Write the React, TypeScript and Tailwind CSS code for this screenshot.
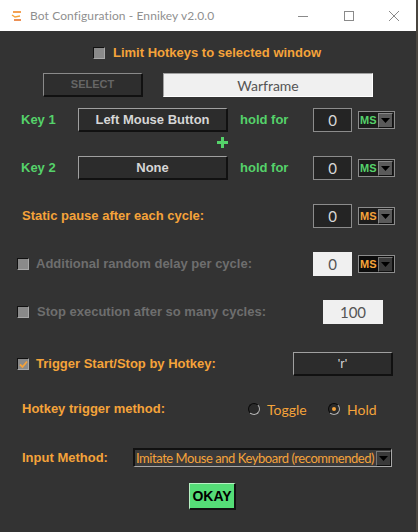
import React from 'react';

const bold = "font-['Liberation_Sans',Arial,sans-serif] font-bold";
const ui = "font-['Lato','Noto_Sans',sans-serif]";

function CheckBox({ checked = false }: { checked?: boolean }) {
  return (
    <div className="w-[12px] h-[12px] border-t border-l border-[#111] border-b border-r border-b-[#a8a8a8] border-r-[#a8a8a8] bg-[#8a8a8a] flex items-center justify-center shrink-0">
      {checked && (
        <svg width="9" height="9" viewBox="0 0 9 9">
          <path d="M1 4.5 L3.5 7 L8 1.5" fill="none" stroke="#f5a33a" strokeWidth="1.8" />
        </svg>
      )}
    </div>
  );
}

function Radio({ checked = false }: { checked?: boolean }) {
  return (
    <div className="w-[12px] h-[12px] rounded-full border border-[#b0b0b0] border-t-[#0a0a0a] border-l-[#0a0a0a] bg-[#2a2a2a] flex items-center justify-center shrink-0">
      {checked && <div className="w-[4px] h-[4px] rounded-full bg-[#f5a33a]" />}
    </div>
  );
}

function Arrow({ dark = false }: { dark?: boolean }) {
  return (
    <div
      className={`w-[15px] h-[15px] shrink-0 flex items-center justify-center border-t border-l border-b border-r ${
        dark ? 'bg-[#3a3a3a] border-[#777] border-b-[#111] border-r-[#111]' : 'bg-[#5a5a5a] border-[#888] border-b-[#111] border-r-[#111]'
      }`}
    >
      <svg width="9" height="5" viewBox="0 0 9 5">
        <path d="M0 0 L9 0 L4.5 5 Z" fill="#000" />
      </svg>
    </div>
  );
}

function MsDrop({ color, dark = false }: { color: 'green' | 'orange'; dark?: boolean }) {
  return (
    <div className={`ml-[6px] w-[37px] h-[18px] border border-[#8c8c8c] flex items-center pl-[1px] pr-[1px] ${dark ? 'bg-[#0c0c0c]' : 'bg-[#1c1c1c]'}`}>
      <span className={`${bold} text-[11px] leading-none flex-1 ${color === 'green' ? 'text-[#55d26a]' : 'text-[#f5a33a]'}`}>
        MS
      </span>
      <Arrow dark={dark} />
    </div>
  );
}

function NumBox({ value }: { value: string }) {
  return (
    <div className={`w-[39px] h-[24px] border border-[#8c8c8c] bg-[#242424] flex items-center justify-center ${ui} text-[15px] text-[#d8d8d8]`}>
      {value}
    </div>
  );
}

function RaisedButton({ label, className }: { label: string; className: string }) {
  return (
    <div
      className={`${className} border-t border-l border-[#a0a0a0] border-b-2 border-r-2 border-b-[#111] border-r-[#111] bg-[#2c2c2c] flex items-center justify-center ${bold} text-[13px] text-[#d6d6d6]`}
    >
      {label}
    </div>
  );
}

export default function App() {
  return (
    <div className="flex w-[418px] h-[532px] bg-[#333333]">
      <div className="w-[416px] h-[532px] flex flex-col">
        {/* title bar */}
        <div className="h-[31px] bg-white flex items-center shrink-0">
          <svg width="12" height="12" viewBox="0 0 12 12" className="ml-[11px]">
            <path d="M2 2 L10 2" stroke="#f08a2a" strokeWidth="1.6" />
            <path d="M1 5 L4 7 L9 6" stroke="#f5a33a" strokeWidth="1.4" fill="none" />
            <path d="M3 10 L10 10" stroke="#e8742a" strokeWidth="1.6" />
          </svg>
          <span className={`${ui} text-[12px] text-[#8f8f8f] ml-[7px] tracking-[0.1px]`}>Bot Configuration - Ennikey v2.0.0</span>
          <div className="flex-1" />
          <svg width="10" height="10" viewBox="0 0 10 10" className="mr-[36px]">
            <path d="M0 5.5 L10 5.5" stroke="#8a8a8a" strokeWidth="1" />
          </svg>
          <svg width="10" height="10" viewBox="0 0 10 10" className="mr-[35px]">
            <rect x="0.5" y="0.5" width="9" height="9" fill="none" stroke="#8a8a8a" strokeWidth="1" />
          </svg>
          <svg width="10" height="10" viewBox="0 0 10 10" className="mr-[17px]">
            <path d="M0 0 L10 10 M10 0 L0 10" stroke="#8a8a8a" strokeWidth="1" />
          </svg>
        </div>

        {/* body */}
        <div className="flex-1 flex flex-col">
          <div className="mt-[13px] h-[18px] flex items-center pl-[93px]">
            <CheckBox />
            <span className={`${bold} text-[13px] text-[#f5a33a] ml-[8px]`}>Limit Hotkeys to selected window</span>
          </div>

          <div className="mt-[11px] h-[24px] flex items-stretch pl-[43px]">
            <div className={`w-[100px] border-t border-l border-[#8a8a8a] border-b-2 border-r-2 border-b-[#111] border-r-[#111] bg-[#2e2e2e] flex items-center justify-center ${bold} text-[11px] text-[#666]`}>
              SELECT
            </div>
            <div className={`ml-[20px] w-[210px] border-t border-l border-[#a0a0a0] border-b border-r border-b-white border-r-white bg-[#f0f0f0] flex items-center justify-center ${ui} text-[14px] text-[#555]`}>
              Warframe
            </div>
          </div>

          <div className="mt-[11px] h-[24px] flex items-center pl-[21px]">
            <span className={`${bold} text-[13px] text-[#55d26a] w-[57px]`}>Key 1</span>
            <RaisedButton label="Left Mouse Button" className="w-[150px] h-[24px]" />
            <span className={`${bold} text-[13px] text-[#55d26a] ml-[12px] w-[73px]`}>hold for</span>
            <NumBox value="0" />
            <MsDrop color="green" />
          </div>

          <div className="mt-[5px] h-[12px] flex pl-[217px]">
            <svg width="11" height="11" viewBox="0 0 11 11">
              <path d="M5.5 0 L5.5 11 M0 5.5 L11 5.5" stroke="#55d26a" strokeWidth="3" />
            </svg>
          </div>

          <div className="mt-[7px] h-[24px] flex items-center pl-[21px]">
            <span className={`${bold} text-[13px] text-[#55d26a] w-[57px]`}>Key 2</span>
            <RaisedButton label="None" className="w-[150px] h-[24px]" />
            <span className={`${bold} text-[13px] text-[#55d26a] ml-[12px] w-[73px]`}>hold for</span>
            <NumBox value="0" />
            <MsDrop color="green" />
          </div>

          <div className="mt-[24px] h-[24px] flex items-center pl-[22px]">
            <span className={`${bold} text-[13px] text-[#f5a33a] w-[291px]`}>Static pause after each cycle:</span>
            <NumBox value="0" />
            <MsDrop color="orange" />
          </div>

          <div className="mt-[24px] h-[24px] flex items-center pl-[17px]">
            <CheckBox />
            <span className={`${bold} text-[13px] text-[#6e6e6e] ml-[7px] w-[277px]`}>Additional random delay per cycle:</span>
            <div className={`w-[39px] h-[24px] bg-[#f0f0f0] flex items-center justify-center ${ui} text-[15px] text-[#555]`}>0</div>
            <MsDrop color="orange" dark />
          </div>

          <div className="mt-[24px] h-[24px] flex items-center pl-[17px]">
            <CheckBox />
            <span className={`${bold} text-[13px] text-[#6e6e6e] ml-[8px] w-[286px]`}>Stop execution after so many cycles:</span>
            <div className={`w-[60px] h-[24px] bg-[#f0f0f0] flex items-center justify-center ${ui} text-[15px] text-[#555]`}>100</div>
          </div>

          <div className="mt-[28px] h-[24px] flex items-center pl-[17px]">
            <CheckBox checked />
            <span className={`${bold} text-[13px] text-[#f5a33a] ml-[7px] w-[257px]`}>Trigger Start/Stop by Hotkey:</span>
            <RaisedButton label="'r'" className="w-[100px] h-[24px] font-normal" />
          </div>

          <div className="mt-[23px] h-[20px] flex items-center pl-[22px]">
            <span className={`${bold} text-[13px] text-[#f5a33a] w-[226px]`}>Hotkey trigger method:</span>
            <Radio />
            <span className={`${ui} text-[14px] text-[#f5a33a] ml-[7px] w-[61px]`}>Toggle</span>
            <Radio checked />
            <span className={`${ui} text-[14px] text-[#f5a33a] ml-[7px]`}>Hold</span>
          </div>

          <div className="mt-[29px] h-[19px] flex items-center pl-[22px]">
            <span className={`${bold} text-[13px] text-[#f5a33a] w-[111px]`}>Input Method:</span>
            <div className="w-[259px] h-[19px] border-t-2 border-l-2 border-[#111] border-b border-r border-b-[#a8a8a8] border-r-[#a8a8a8] bg-[#3a3a3a] flex items-center overflow-hidden">
              <span className={`${ui} text-[13px] tracking-[-0.45px] leading-none text-[#f5a33a] flex-1 whitespace-nowrap pl-[1px]`}>
                Imitate Mouse and Keyboard (recommended)
              </span>
              <Arrow dark />
            </div>
          </div>

          <div className="mt-[16px] h-[27px] flex pl-[189px]">
            <div className={`w-[47px] h-[27px] border-t border-l border-[#b8f0c4] border-b-2 border-r-2 border-b-[#111] border-r-[#111] bg-[#55dd77] flex items-center justify-center ${bold} text-[14px] text-black`}>
              OKAY
            </div>
          </div>
        </div>
      </div>
      <div className="w-[2px] h-[532px] bg-[#4a4640]" />
    </div>
  );
}
